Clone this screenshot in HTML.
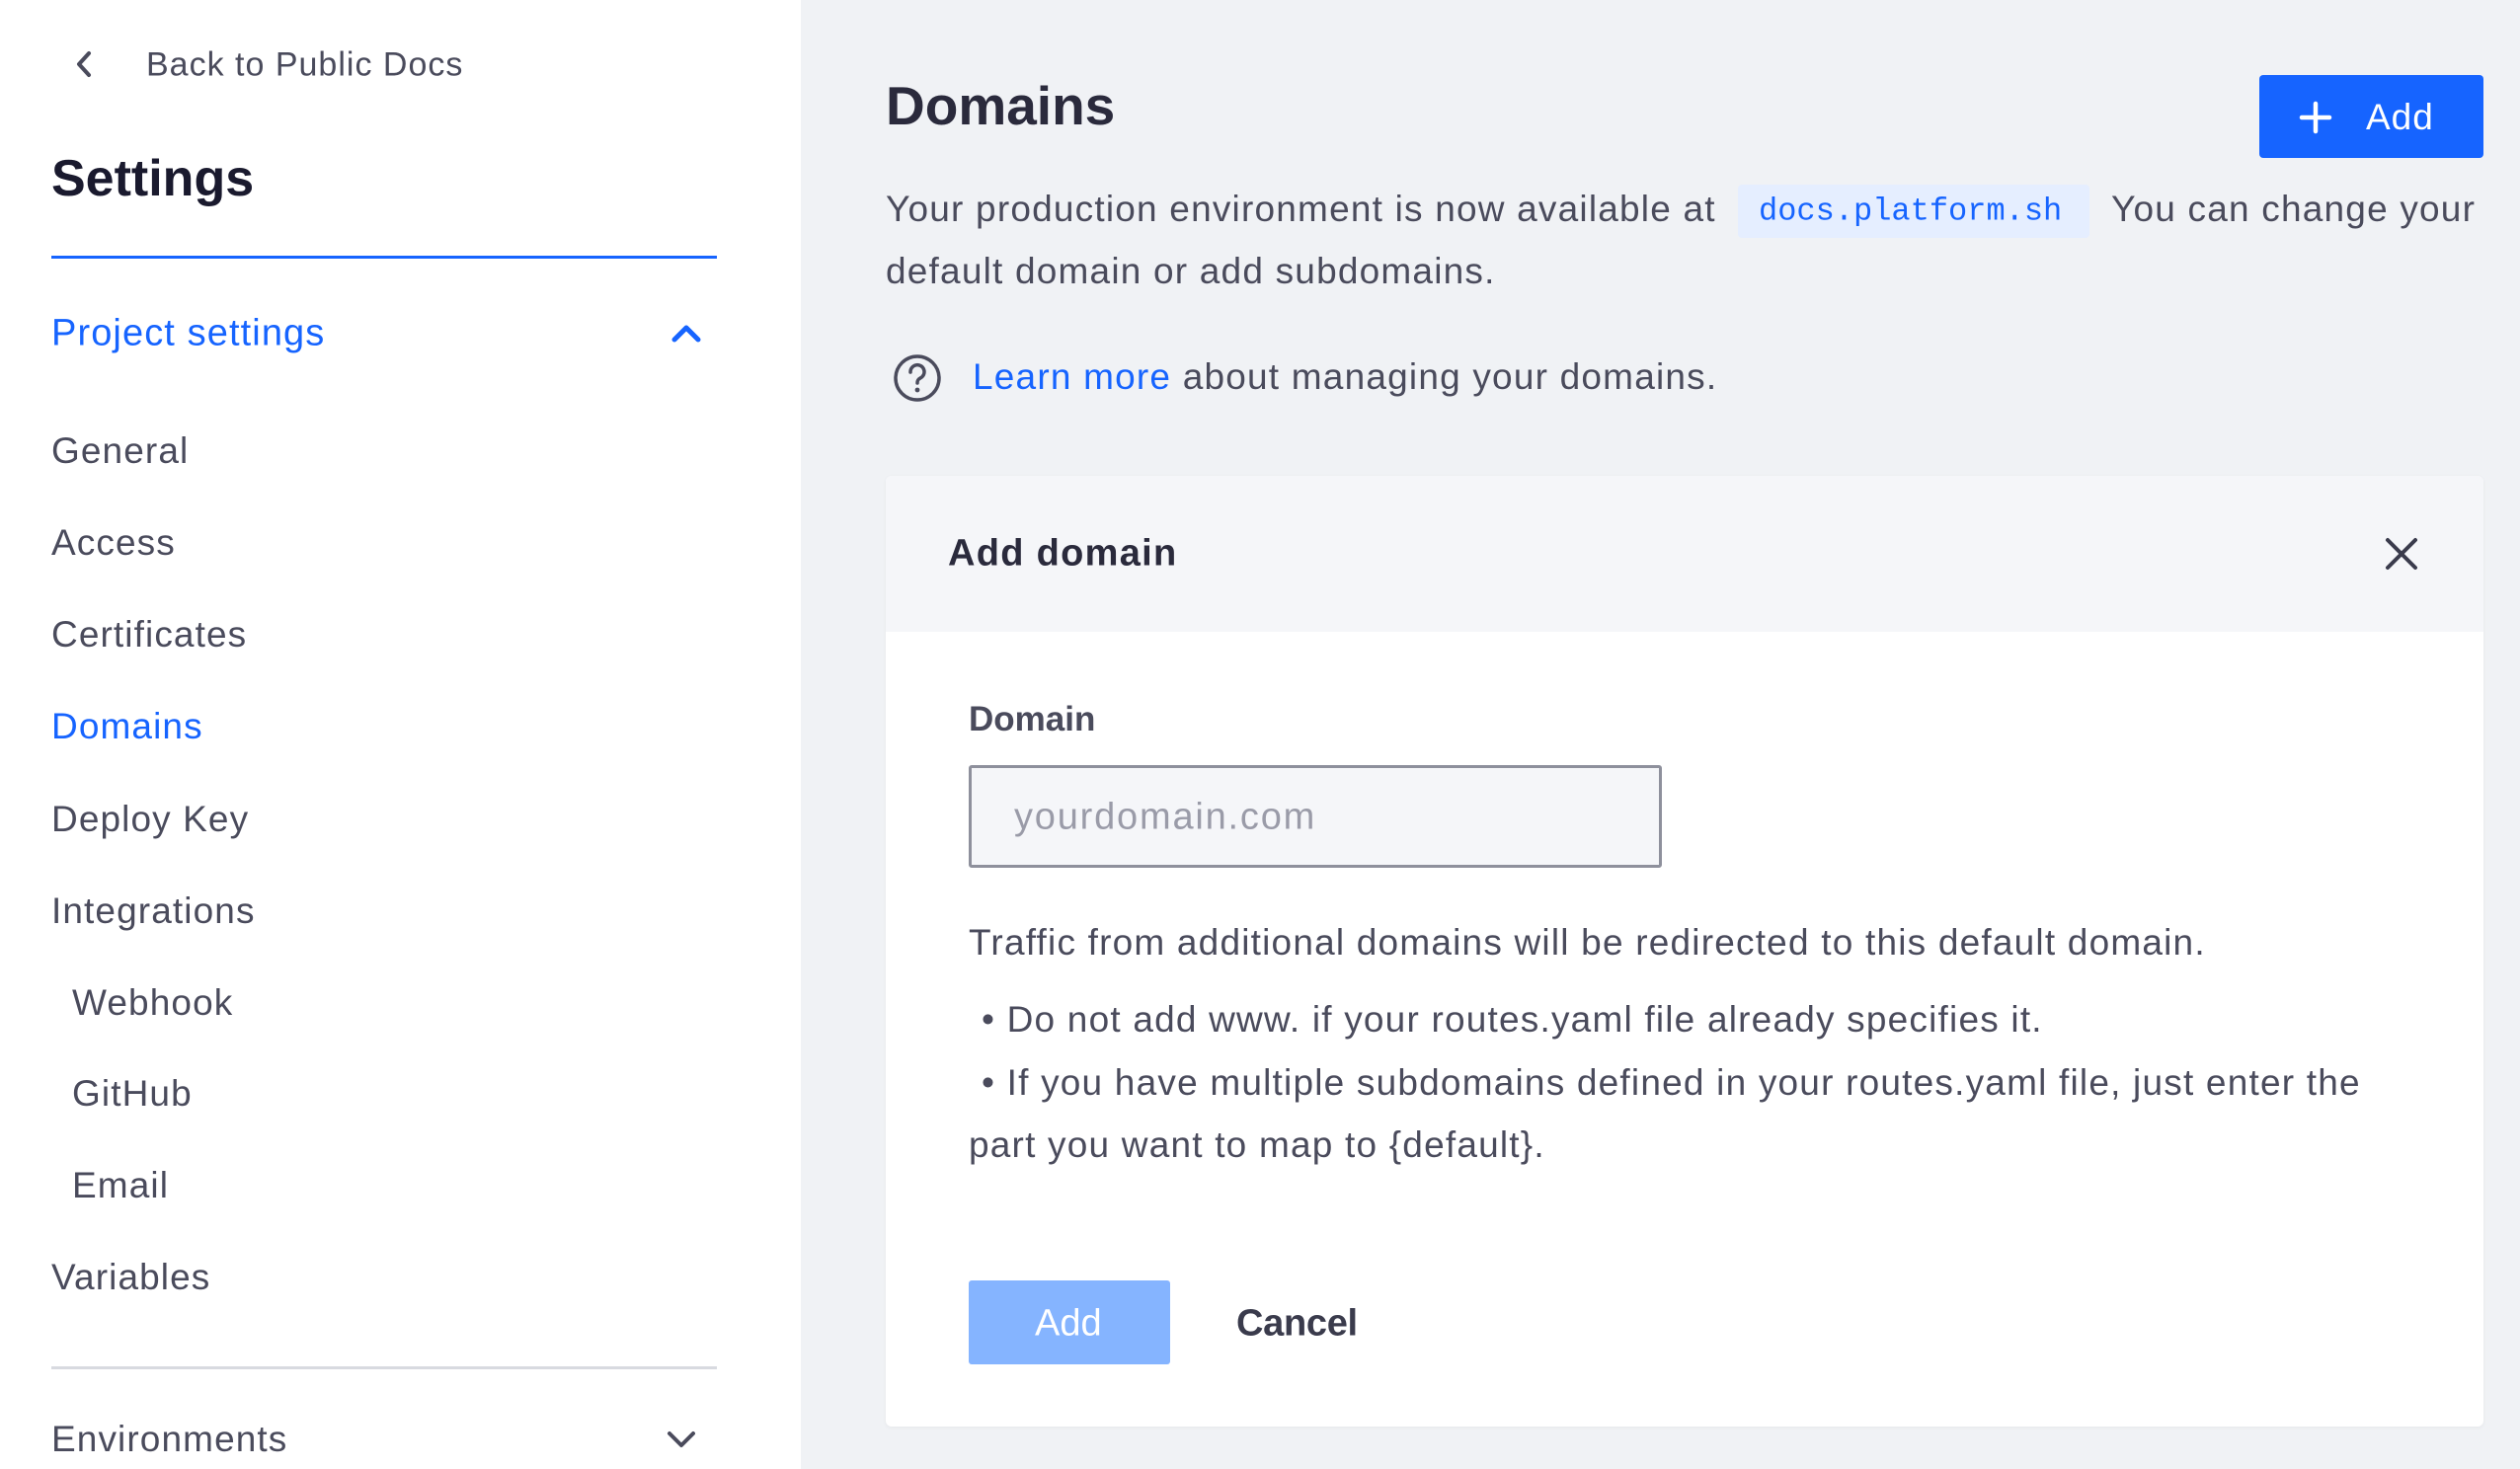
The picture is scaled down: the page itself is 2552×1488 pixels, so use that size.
<!DOCTYPE html>
<html><head><meta charset="utf-8"><style>
*{margin:0;padding:0;box-sizing:border-box}
body{width:2552px;height:1488px;overflow:hidden;background:#f0f2f5;font-family:"Liberation Sans",sans-serif;color:#4a4b5c;position:relative}
.a{position:absolute;white-space:nowrap}
#side{position:absolute;left:0;top:0;width:811px;height:1488px;background:#fff}
.nav{font-size:37px;color:#4a4b5c;transform:translateY(-50%);letter-spacing:1.1px}
.t{transform:translateY(-50%)}
.r{letter-spacing:1.2px}
</style></head><body>
<div id="side">
<svg class="a" style="left:72px;top:50px" width="26" height="30" viewBox="0 0 26 30"><path d="M18 4 L8 15 L18 26" fill="none" stroke="#4a4b5c" stroke-width="4" stroke-linecap="round" stroke-linejoin="round"/></svg>
<div class="a t" style="left:148px;top:66px;font-size:34px;color:#4a4b5c;letter-spacing:1px">Back to Public Docs</div>
<div class="a t" style="left:52px;top:181px;font-size:52px;font-weight:bold;color:#1a1a2e">Settings</div>
<div class="a" style="left:52px;top:259px;width:674px;height:3px;background:#1664ff"></div>
<div class="a t" style="left:52px;top:338px;font-size:38px;color:#1664ff;letter-spacing:1.1px">Project settings</div>
<svg class="a" style="left:678px;top:325px" width="34" height="24" viewBox="0 0 34 24"><path d="M5 19 L17 7 L29 19" fill="none" stroke="#1664ff" stroke-width="5" stroke-linecap="round" stroke-linejoin="round"/></svg>
<div class="a nav" style="left:52px;top:457px">General</div>
<div class="a nav" style="left:52px;top:550px">Access</div>
<div class="a nav" style="left:52px;top:643px">Certificates</div>
<div class="a nav" style="left:52px;top:736px;color:#1664ff">Domains</div>
<div class="a nav" style="left:52px;top:830px">Deploy Key</div>
<div class="a nav" style="left:52px;top:923px">Integrations</div>
<div class="a nav" style="left:73px;top:1016px">Webhook</div>
<div class="a nav" style="left:73px;top:1108px">GitHub</div>
<div class="a nav" style="left:73px;top:1201px">Email</div>
<div class="a nav" style="left:52px;top:1294px">Variables</div>
<div class="a" style="left:52px;top:1384px;width:674px;height:3px;background:#d8dae0"></div>
<div class="a nav" style="left:52px;top:1458px">Environments</div>
<svg class="a" style="left:673px;top:1446px" width="34" height="24" viewBox="0 0 34 24"><path d="M5 6 L17 18 L29 6" fill="none" stroke="#4a4b5c" stroke-width="4" stroke-linecap="round" stroke-linejoin="round"/></svg>
</div>

<div class="a t" style="left:897px;top:107px;font-size:55px;font-weight:bold;color:#2a2a3c">Domains</div>
<div class="a" style="left:2288px;top:76px;width:227px;height:84px;background:#1664ff;border-radius:4px"></div>
<svg class="a" style="left:2328px;top:102px" width="34" height="34" viewBox="0 0 34 34"><path d="M17 3V31M3 17H31" stroke="#fff" stroke-width="4.5" stroke-linecap="round"/></svg>
<div class="a t" style="left:2396px;top:119px;font-size:37px;color:#fff;letter-spacing:1px">Add</div>

<div class="a t r" style="left:897px;top:212px;font-size:37px">Your production environment is now available at</div>
<div class="a" style="left:1760px;top:187px;width:356px;height:54px;background:#e5eeff;border-radius:4px"></div>
<div class="a t" style="left:1781px;top:214px;font-size:32px;font-family:'Liberation Mono',monospace;color:#1664ff">docs.platform.sh</div>
<div class="a t r" style="left:2138px;top:212px;font-size:37px">You can change your</div>
<div class="a t r" style="left:897px;top:275px;font-size:37px">default domain or add subdomains.</div>

<svg class="a" style="left:904px;top:358px" width="50" height="50" viewBox="0 0 50 50"><circle cx="25" cy="25" r="22" fill="none" stroke="#4a4b5c" stroke-width="3.5"/><path d="M18 19a7 7 0 1 1 10 6c-2 1-3 2-3 5" fill="none" stroke="#4a4b5c" stroke-width="3.5" stroke-linecap="round"/><circle cx="25" cy="37" r="2.4" fill="#4a4b5c"/></svg>
<div class="a t r" style="left:985px;top:382px;font-size:37px"><span style="color:#1664ff">Learn more</span> about managing your domains.</div>

<div class="a" style="left:897px;top:482px;width:1618px;height:963px;background:#fff;border-radius:6px;box-shadow:0 1px 4px rgba(0,0,0,0.05);overflow:hidden">
<div style="height:158px;background:#f5f6f9"></div>
</div>
<div class="a t" style="left:960px;top:561px;font-size:38px;font-weight:bold;color:#2a2a3c;letter-spacing:1.3px">Add domain</div>
<svg class="a" style="left:2414px;top:543px" width="36" height="36" viewBox="0 0 36 36"><path d="M4 4L32 32M32 4L4 32" stroke="#3a3b4c" stroke-width="4" stroke-linecap="round"/></svg>

<div class="a t" style="left:981px;top:729px;font-size:35px;font-weight:bold;color:#4a4b5c">Domain</div>
<div class="a" style="left:981px;top:775px;width:702px;height:104px;background:#f5f6f9;border:3px solid #8e909c;border-radius:3px"></div>
<div class="a t" style="left:1027px;top:828px;font-size:38px;color:#9a9ba8;letter-spacing:1.8px">yourdomain.com</div>

<div class="a t r" style="left:981px;top:955px;font-size:37px">Traffic from additional domains will be redirected to this default domain.</div>
<div class="a t r" style="left:994px;top:1033px;font-size:37px">• Do not add www. if your routes.yaml file already specifies it.</div>
<div class="a t r" style="left:994px;top:1097px;font-size:37px">• If you have multiple subdomains defined in your routes.yaml file, just enter the</div>
<div class="a t r" style="left:981px;top:1160px;font-size:37px">part you want to map to {default}.</div>

<div class="a" style="left:981px;top:1297px;width:204px;height:85px;background:#85b4ff;border-radius:3px"></div>
<div class="a t" style="left:1048px;top:1341px;font-size:38px;color:#fff">Add</div>
<div class="a t" style="left:1252px;top:1341px;font-size:38px;font-weight:bold;color:#3a3b4c;letter-spacing:-0.3px">Cancel</div>
</body></html>
